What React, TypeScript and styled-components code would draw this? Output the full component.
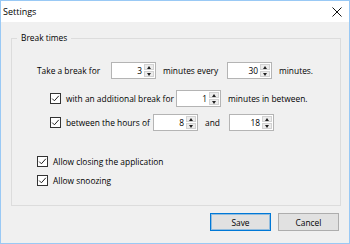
import React from 'react';
import styled, { createGlobalStyle } from 'styled-components';

const GlobalStyle = createGlobalStyle`
  html, body {
    margin: 0;
    padding: 0;
    background: #ffffff;
  }
  body {
    font-family: "Segoe UI", "Open Sans", "Liberation Sans", sans-serif;
    font-size: 8.4px;
    color: #000000;
  }
`;

const Window = styled.div`
  width: 350px;
  height: 244px;
  box-sizing: border-box;
  border: 1px solid #99c9f5;
  display: flex;
  flex-direction: column;
  background: #f0f0f0;
`;

const TitleBar = styled.div`
  height: 21px;
  flex: none;
  display: flex;
  align-items: center;
  justify-content: space-between;
  padding: 0 7px 0 2px;
  background: #ffffff;
  font-size: 9px;
`;

const CloseIcon = styled.svg`
  width: 10px;
  height: 10px;
  display: block;
`;

const Body = styled.div`
  flex: 1;
  display: flex;
  flex-direction: column;
  padding: 10px 8px 0 10px;
`;

const Group = styled.fieldset`
  margin: 0;
  padding: 0;
  min-width: 0;
  border: 1px solid #dcdcdc;
`;

const Legend = styled.legend`
  margin-left: 5px;
  padding: 0 4px;
  line-height: 12px;
`;

const GroupBody = styled.div`
  display: flex;
  flex-direction: column;
  padding: 18px 0 16px 25px;
`;

const Row = styled.div<{ $top?: number; $indent?: number }>`
  display: flex;
  align-items: center;
  height: 17px;
  gap: 7px;
  margin-top: ${(p) => p.$top ?? 0}px;
  padding-left: ${(p) => p.$indent ?? 0}px;
  white-space: nowrap;
`;

const Text = styled.span<{ $w?: number }>`
  line-height: 12px;
  ${(p) => (p.$w ? `width: ${p.$w}px; flex: none;` : '')}
`;

const CheckLabel = styled.label<{ $w?: number }>`
  display: flex;
  align-items: center;
  gap: 5px;
  line-height: 12px;
  ${(p) => (p.$w ? `width: ${p.$w}px; flex: none;` : '')}
`;

const Box = styled.span`
  width: 11px;
  height: 11px;
  flex: none;
  box-sizing: border-box;
  border: 1px solid #333333;
  background: #ffffff;
  display: flex;
  align-items: center;
  justify-content: center;
`;

const Spin = styled.div`
  width: 45px;
  height: 17px;
  flex: none;
  box-sizing: border-box;
  border: 1px solid #b4b4b4;
  background: #ffffff;
  display: flex;
`;

const SpinValue = styled.span`
  flex: 1;
  text-align: right;
  padding-right: 2px;
  line-height: 15px;
`;

const SpinArrows = styled.div`
  width: 10px;
  display: flex;
  flex-direction: column;
  gap: 1px;
  padding: 1px 1px 1px 0;
`;

const SpinButton = styled.div<{ $down?: boolean }>`
  flex: 1;
  background: #ececec;
  border: 1px solid #d2d2d2;
  display: flex;
  align-items: center;
  justify-content: center;

  &::after {
    content: '';
    border-left: 2.5px solid transparent;
    border-right: 2.5px solid transparent;
    ${(p) => (p.$down ? 'border-top: 3px solid #202020;' : 'border-bottom: 3px solid #202020;')}
  }
`;

const Footer = styled.div`
  display: flex;
  justify-content: flex-end;
  gap: 7px;
  margin-top: 7px;
  padding-right: 2px;
`;

const Button = styled.button<{ $primary?: boolean }>`
  width: 61px;
  height: 18px;
  padding: 0;
  font: inherit;
  color: #000000;
  background: #e1e1e1;
  border: 1px solid ${(p) => (p.$primary ? '#0078d7' : '#adadad')};
  box-shadow: ${(p) => (p.$primary ? 'inset 0 0 0 1px rgba(0, 120, 215, 0.35)' : 'none')};
`;

const SpinBox: React.FC<{ value: number }> = ({ value }) => (
  <Spin>
    <SpinValue>{value}</SpinValue>
    <SpinArrows>
      <SpinButton />
      <SpinButton $down />
    </SpinArrows>
  </Spin>
);

const Check: React.FC<{ label: string; w?: number }> = ({ label, w }) => (
  <CheckLabel $w={w}>
    <Box>
      <svg width="9" height="9" viewBox="0 0 9 9">
        <path d="M1.2 4.6 L3.4 6.8 L7.8 1.8" fill="none" stroke="#222" strokeWidth="1" />
      </svg>
    </Box>
    {label}
  </CheckLabel>
);

const App: React.FC = () => {
  return (
    <>
      <GlobalStyle />
      <Window>
        <TitleBar>
          <span>Settings</span>
          <CloseIcon viewBox="0 0 10 10">
            <path d="M0.5 0.5 L9.5 9.5 M9.5 0.5 L0.5 9.5" stroke="#111" strokeWidth="1" />
          </CloseIcon>
        </TitleBar>
        <Body>
          <Group>
            <Legend>Break times</Legend>
            <GroupBody>
              <Row>
                <Text $w={67}>Take a break for</Text>
                <SpinBox value={3} />
                <Text $w={57}>minutes every</Text>
                <SpinBox value={30} />
                <Text>minutes.</Text>
              </Row>
              <Row $top={11} $indent={13}>
                <Check label="with an additional break for" w={119} />
                <SpinBox value={1} />
                <Text>minutes in between.</Text>
              </Row>
              <Row $top={7} $indent={13}>
                <Check label="between the hours of" w={96} />
                <SpinBox value={8} />
                <Text $w={17}>and</Text>
                <SpinBox value={18} />
              </Row>
              <Row $top={22}>
                <Check label="Allow closing the application" />
              </Row>
              <Row $top={2}>
                <Check label="Allow snoozing" />
              </Row>
            </GroupBody>
          </Group>
          <Footer>
            <Button $primary>Save</Button>
            <Button>Cancel</Button>
          </Footer>
        </Body>
      </Window>
    </>
  );
};

export default App;
